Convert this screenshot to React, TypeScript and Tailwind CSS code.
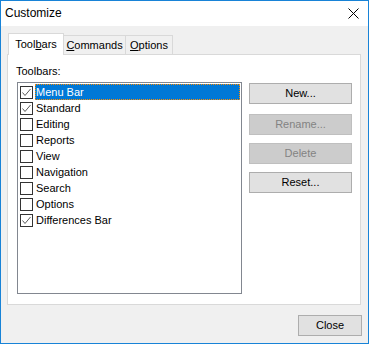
import React from "react";

const toolbars = [
  { label: "Menu Bar", checked: true, selected: true },
  { label: "Standard", checked: true },
  { label: "Editing", checked: false },
  { label: "Reports", checked: false },
  { label: "View", checked: false },
  { label: "Navigation", checked: false },
  { label: "Search", checked: false },
  { label: "Options", checked: false },
  { label: "Differences Bar", checked: true },
];

function CheckBox({ checked }: { checked: boolean }) {
  return (
    <div className="w-[13px] h-[13px] border border-[#333333] bg-white shrink-0 flex items-center justify-center">
      {checked && (
        <svg width="11" height="11" viewBox="0 0 11 11">
          <polyline
            points="1.5,5.5 4,8.5 9.5,2"
            fill="none"
            stroke="#5a5a5a"
            strokeWidth="1"
          />
        </svg>
      )}
    </div>
  );
}

function Button({ label, disabled }: { label: string; disabled?: boolean }) {
  return (
    <div
      className={
        disabled
          ? "h-[21px] w-full border border-[#bfbfbf] bg-[#cccccc] text-[#838383] flex items-center justify-center"
          : "h-[21px] w-full border border-[#adadad] bg-[#e1e1e1] text-black flex items-center justify-center"
      }
    >
      {label}
    </div>
  );
}

export default function App() {
  return (
    <div className="w-[369px] h-[344px] border border-[#1883d7] bg-[#f0f0f0] flex flex-col font-['Liberation_Sans',sans-serif] text-[11px] leading-[13px] text-black">
      {/* Title bar */}
      <div className="h-[25px] bg-white flex items-center justify-between pl-[4px] pr-[9px] shrink-0">
        <span className="text-[12px]">Customize</span>
        <svg width="11" height="11" viewBox="0 0 11 11">
          <path d="M0.5 0.5 L10.5 10.5 M10.5 0.5 L0.5 10.5" stroke="#000" strokeWidth="1" />
        </svg>
      </div>

      <div className="flex-1 flex flex-col pl-[6px] pr-[7px] pt-[7px]">
        {/* Tabs */}
        <div className="flex items-end h-[21px]">
          <div className="relative z-10 ml-[1px] -mb-px h-[22px] w-[56px] border border-b-0 border-[#d9d9d9] bg-white flex items-center justify-center">
            <span>
              Tool<span className="underline">b</span>ars
            </span>
          </div>
          <div className="h-[19px] w-[62px] border border-l-0 border-b-0 border-[#d9d9d9] flex items-center justify-center">
            <span>
              <span className="underline">C</span>ommands
            </span>
          </div>
          <div className="h-[19px] w-[47px] border border-l-0 border-b-0 border-[#d9d9d9] flex items-center justify-center">
            <span>
              <span className="underline">O</span>ptions
            </span>
          </div>
        </div>

        {/* Panel */}
        <div className="h-[251px] border border-[#d9d9d9] bg-white flex pl-[8px] pt-[10px]">
          <div className="flex flex-col">
            <div>Toolbars:</div>
            <div className="mt-[4px] ml-[1px] w-[225px] h-[212px] border border-[#828790] bg-white flex flex-col pt-[1px]">
              {toolbars.map((t) => (
                <div key={t.label} className="h-[16px] flex items-center pl-[2px]">
                  <CheckBox checked={t.checked} />
                  <div
                    className={
                      t.selected
                        ? "ml-[2px] mr-[1px] flex-1 h-[16px] bg-[#0078d7] text-white outline-1 outline-dotted outline-[#ff8c00] -outline-offset-1 flex items-center pl-[1px]"
                        : "ml-[2px] flex-1 h-[16px] flex items-center pl-[1px]"
                    }
                  >
                    {t.label}
                  </div>
                </div>
              ))}
            </div>
          </div>
          <div className="ml-[7px] mt-[18px] w-[103px] flex flex-col">
            <Button label="New..." />
            <div className="mt-[10px]">
              <Button label="Rename..." disabled />
            </div>
            <div className="mt-[8px]">
              <Button label="Delete" disabled />
            </div>
            <div className="mt-[8px]">
              <Button label="Reset..." />
            </div>
          </div>
        </div>

        <div className="mt-[10px] flex justify-end">
          <div className="-mr-px h-[21px] w-[64px] border border-[#adadad] bg-[#e1e1e1] flex items-center justify-center">
            Close
          </div>
        </div>
      </div>
    </div>
  );
}
